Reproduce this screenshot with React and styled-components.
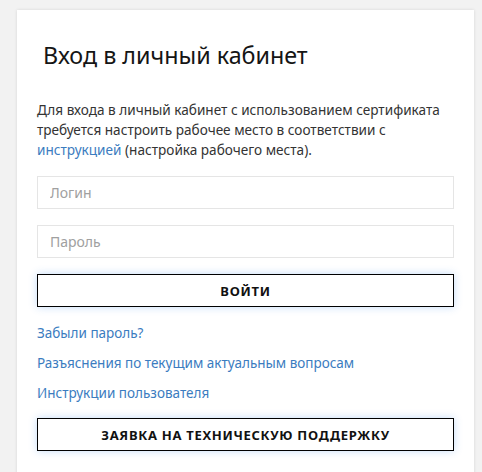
import React from 'react';
import styled, { createGlobalStyle } from 'styled-components';

const GlobalStyle = createGlobalStyle`
  html, body {
    margin: 0;
    padding: 0;
    background: #f2f2f2;
    font-family: "Noto Sans", "Open Sans", sans-serif;
  }
`;

const Page = styled.div`
  padding: 10px 8px 0 17px;
  height: 472px;
  box-sizing: border-box;
  overflow: hidden;
`;

const Card = styled.div`
  background: #fff;
  box-shadow: 0 0 3px rgba(0, 0, 0, 0.12);
  padding: 30px 20px 40px;
  min-height: 500px;
  box-sizing: border-box;
`;

const Title = styled.h1`
  margin: 0 0 0 6px;
  font-size: 23.3px;
  font-weight: 400;
  line-height: 30px;
  color: #151515;
`;

const Note = styled.p`
  margin: 30px 0 0;
  font-size: 13.6px;
  line-height: 20px;
  color: #333;
`;

const Link = styled.a`
  color: #3b7cc0;
  text-decoration: none;
  cursor: pointer;
`;

const Form = styled.form`
  display: flex;
  flex-direction: column;
  gap: 16px;
  margin-top: 16px;
`;

const Input = styled.input`
  height: 33px;
  box-sizing: border-box;
  border: 1px solid #e5e5e5;
  padding: 0 12px;
  font-family: inherit;
  font-size: 14px;
  color: #333;
  outline: none;

  &::placeholder {
    color: #a0a0a0;
  }
`;

const Button = styled.button`
  width: 100%;
  height: 33px;
  box-sizing: border-box;
  border: 1.5px solid #000;
  background: #fff;
  font-family: inherit;
  font-size: 13px;
  font-weight: 700;
  letter-spacing: 0.7px;
  color: #111;
  text-transform: uppercase;
  box-shadow: 0 0 8px rgba(60, 140, 235, 0.3);
  cursor: pointer;
  margin-top: ${({ $top }) => $top || 0}px;
`;

const Links = styled.nav`
  display: flex;
  flex-direction: column;
  margin-top: 11px;
  font-size: 13.5px;
  line-height: 30px;
`;

export default function App() {
  return (
    <>
      <GlobalStyle />
      <Page>
        <Card>
          <Title>Вход в личный кабинет</Title>
          <Note>
            Для входа в личный кабинет с использованием сертификата требуется
            настроить рабочее место в соответствии с{' '}
            <Link>инструкцией</Link> (настройка рабочего места).
          </Note>
          <Form onSubmit={(e) => e.preventDefault()}>
            <Input placeholder="Логин" />
            <Input type="password" placeholder="Пароль" />
            <Button type="submit">Войти</Button>
          </Form>
          <Links>
            <Link>Забыли пароль?</Link>
            <Link>Разъяснения по текущим актуальным вопросам</Link>
            <Link>Инструкции пользователя</Link>
          </Links>
          <Button type="button" $top={10}>
            Заявка на техническую поддержку
          </Button>
        </Card>
      </Page>
    </>
  );
}
